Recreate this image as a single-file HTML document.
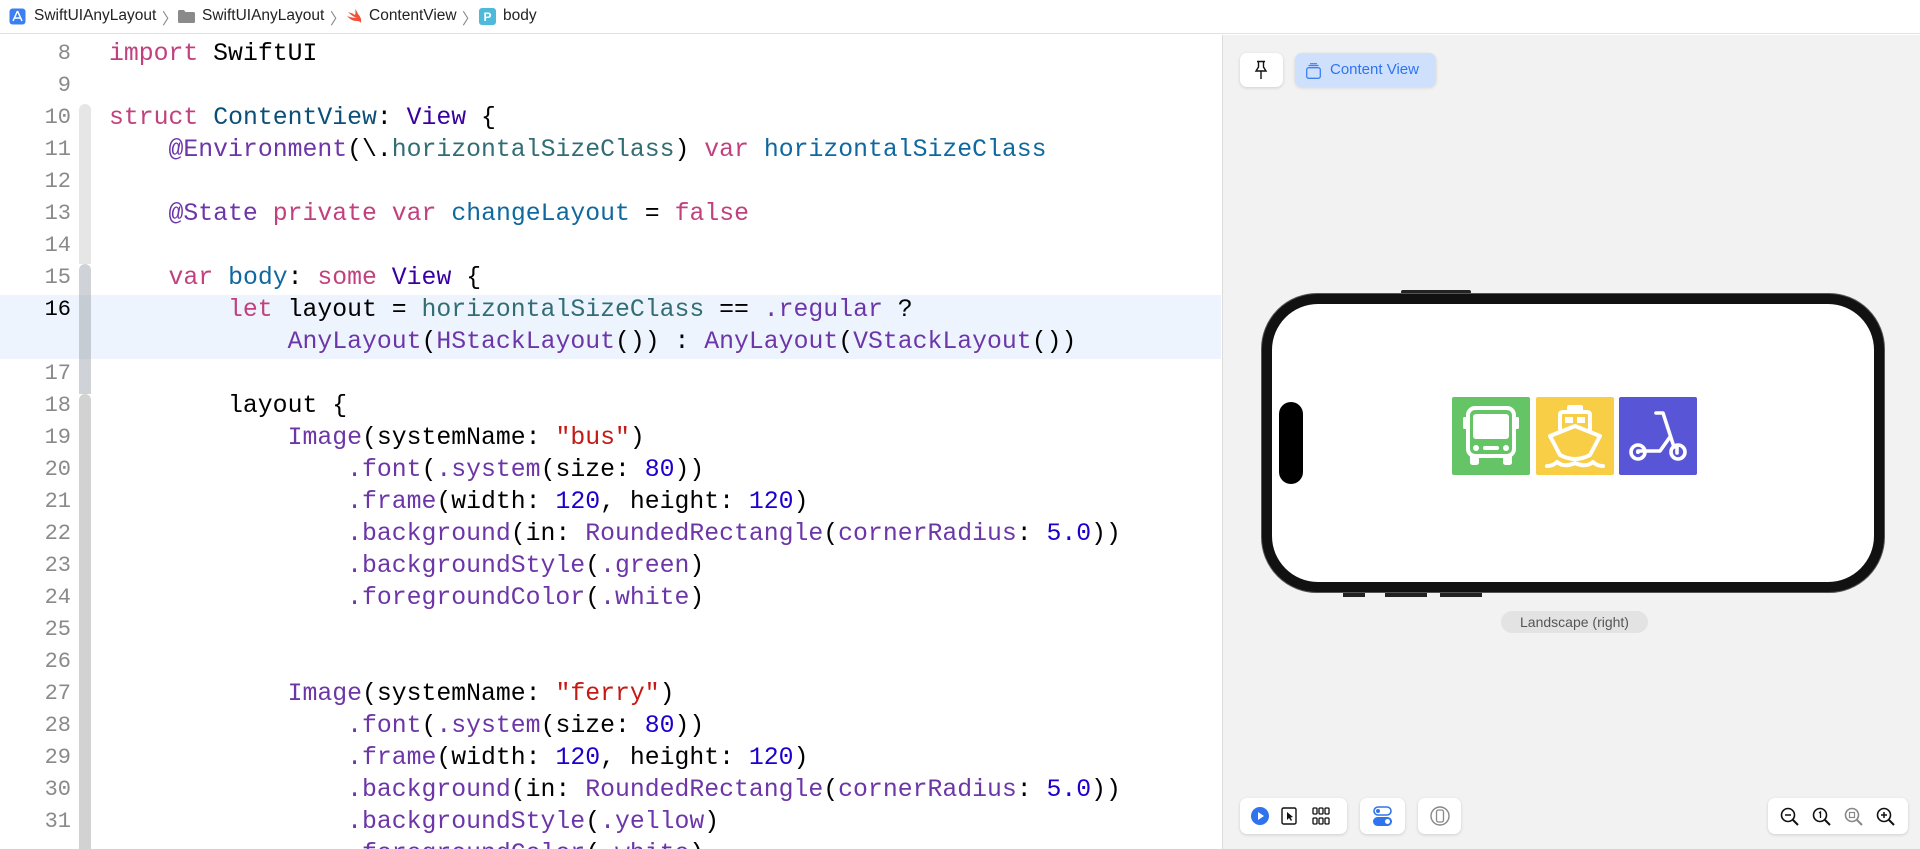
<!DOCTYPE html>
<html><head><meta charset="utf-8"><style>
*{margin:0;padding:0;box-sizing:border-box}
body{width:1920px;height:849px;overflow:hidden;background:#fff;font-family:"Liberation Sans",sans-serif;position:relative}
.top{position:absolute;left:0;top:0;width:1920px;height:34px;border-bottom:1px solid #e2e2e2;background:#fff;font-size:15.5px;color:#222}
.top span{position:absolute;top:7px}
.ed{position:absolute;left:0;top:35px;width:1221px;height:814px;background:#fff;overflow:hidden}
.hl{position:absolute;left:0;top:260px;width:1221px;height:64px;background:#edf4fe}
.ln{position:absolute;left:0;width:71px;text-align:right;font-family:"Liberation Mono",monospace;font-size:22px;color:#8a8a8a;line-height:32px}
.cd{position:absolute;left:109px;font-family:"Liberation Mono",monospace;font-size:24.8px;color:#000;white-space:pre;line-height:32px}
.k{color:#c1417f}.t{color:#3900a0}.p{color:#0b4f79}.a{color:#6c36a9}.m{color:#326d74}.d{color:#0f68a0}.s{color:#c41a16}.n{color:#1c00cf}
.pv{position:absolute;left:1222px;top:35px;width:698px;height:814px;background:#f2f2f2;border-left:1px solid #dcdcdc}
.btn{position:absolute;background:#fff;border-radius:7px;box-shadow:0 1px 3px rgba(0,0,0,.15)}
</style></head><body>
<div class="top">
<svg style="position:absolute;left:9px;top:8px" width="17" height="17" viewBox="0 0 17 17"><rect x="0.5" y="0.5" width="16" height="16" rx="3" fill="#3b7ff0"/><path d="M8.5 3 L4 13 M8.5 3 L13 13 M5.5 10 H11.5" stroke="#fff" stroke-width="1.5" fill="none"/></svg>
<span style="left:34px">SwiftUIAnyLayout</span><span style="left:162px;color:#888">〉</span>
<svg style="position:absolute;left:178px;top:10px" width="17" height="13" viewBox="0 0 17 13"><path d="M0 1.5 Q0 0 1.5 0 H6 L7.5 2 H15.5 Q17 2 17 3.5 V11.5 Q17 13 15.5 13 H1.5 Q0 13 0 11.5Z" fill="#8a8a8a"/></svg>
<span style="left:202px">SwiftUIAnyLayout</span><span style="left:330px;color:#888">〉</span>
<svg style="position:absolute;left:346px;top:9px" width="16" height="15" viewBox="0 0 16 15"><path d="M2 3 Q7 8 11 9 Q6 9 1 7 Q5 12 11 12 Q14 12 15 14 Q16 9 12 5 Q11 2 9 0 Q10 4 9 6 Q6 4 2 3Z" fill="#f05138"/></svg>
<span style="left:369px">ContentView</span><span style="left:462px;color:#888">〉</span>
<svg style="position:absolute;left:479px;top:8px" width="17" height="17" viewBox="0 0 17 17"><rect width="17" height="17" rx="3" fill="#4fb9d9"/><text x="8.5" y="13" text-anchor="middle" font-size="12" font-weight="bold" fill="#fff" font-family="Liberation Sans">P</text></svg>
<span style="left:503px">body</span>
</div>
<div class="ed">
<div class="hl"></div>
<div style="position:absolute;left:79px;top:69px;width:12px;height:160px;background:#e6e6e6;border-radius:6px 6px 0 0"></div>
<div style="position:absolute;left:79px;top:229px;width:12px;height:130px;background:#cfd3d8;border-radius:6px 6px 0 0"></div>
<div style="position:absolute;left:79px;top:359px;width:12px;height:460px;background:#d2d2d2;border-radius:6px 6px 0 0"></div>
<div style="position:absolute;left:79px;top:260px;width:12px;height:64px;background:#c6ccd4"></div>
<div class="ln" style="top:3px">8<br>9<br>10<br>11<br>12<br>13<br>14<br>15<br><span style="color:#000">16</span><br>&nbsp;<br>17<br>18<br>19<br>20<br>21<br>22<br>23<br>24<br>25<br>26<br>27<br>28<br>29<br>30<br>31</div>
<div class="cd" style="top:3px"><span class="k">import</span> SwiftUI

<span class="k">struct</span> <span class="p">ContentView</span>: <span class="t">View</span> {
    <span class="a">@Environment</span>(\.<span class="m">horizontalSizeClass</span>) <span class="k">var</span> <span class="d">horizontalSizeClass</span>

    <span class="a">@State</span> <span class="k">private</span> <span class="k">var</span> <span class="d">changeLayout</span> = <span class="k">false</span>

    <span class="k">var</span> <span class="d">body</span>: <span class="k">some</span> <span class="t">View</span> {
        <span class="k">let</span> layout = <span class="m">horizontalSizeClass</span> == <span class="a">.regular</span> ?
            <span class="a">AnyLayout</span>(<span class="a">HStackLayout</span>()) : <span class="a">AnyLayout</span>(<span class="a">VStackLayout</span>())

        layout {
            <span class="a">Image</span>(systemName: <span class="s">"bus"</span>)
                <span class="a">.font</span>(<span class="a">.system</span>(size: <span class="n">80</span>))
                <span class="a">.frame</span>(width: <span class="n">120</span>, height: <span class="n">120</span>)
                <span class="a">.background</span>(in: <span class="a">RoundedRectangle</span>(<span class="a">cornerRadius</span>: <span class="n">5.0</span>))
                <span class="a">.backgroundStyle</span>(<span class="a">.green</span>)
                <span class="a">.foregroundColor</span>(<span class="a">.white</span>)


            <span class="a">Image</span>(systemName: <span class="s">"ferry"</span>)
                <span class="a">.font</span>(<span class="a">.system</span>(size: <span class="n">80</span>))
                <span class="a">.frame</span>(width: <span class="n">120</span>, height: <span class="n">120</span>)
                <span class="a">.background</span>(in: <span class="a">RoundedRectangle</span>(<span class="a">cornerRadius</span>: <span class="n">5.0</span>))
                <span class="a">.backgroundStyle</span>(<span class="a">.yellow</span>)
                <span class="a">.foregroundColor</span>(<span class="a">.white</span>)</div>
</div>
<div class="pv">
<div class="btn" style="left:17px;top:18px;width:43px;height:34px"><svg style="position:absolute;left:13px;top:7px" width="16" height="20" viewBox="0 0 16 20"><path d="M4 1.5 H12 M5.5 1.5 V7 L3 11 H13 L10.5 7 V1.5 M8 11 V19" stroke="#111" stroke-width="1.4" fill="none"/></svg></div>
<div class="btn" style="left:72px;top:18px;width:141px;height:34px;background:#cfe0fd;box-shadow:0 1px 3px rgba(0,0,0,.12)"><svg style="position:absolute;left:11px;top:10px" width="15" height="16" viewBox="0 0 15 16"><rect x="0.7" y="4.7" width="13.6" height="10.6" rx="2" stroke="#3b7ff0" stroke-width="1.3" fill="none"/><path d="M2.5 2.5 H12.5 M4 0.7 H11" stroke="#3b7ff0" stroke-width="1.2"/></svg><span style="position:absolute;left:35px;top:8px;font-size:15px;color:#2f74ee">Content View</span></div>
<div style="position:absolute;left:178px;top:255px;width:70px;height:4px;background:#222;border-radius:2px"></div>
<div style="position:absolute;left:120px;top:557px;width:22px;height:5px;background:#222"></div>
<div style="position:absolute;left:162px;top:557px;width:42px;height:5px;background:#222"></div>
<div style="position:absolute;left:217px;top:557px;width:42px;height:5px;background:#222"></div>
<div style="position:absolute;left:38px;top:258px;width:624px;height:300px;background:#111;border-radius:56px;border:1px solid #555"></div>
<div style="position:absolute;left:49px;top:269px;width:602px;height:278px;background:#fff;border-radius:46px"></div>
<div style="position:absolute;left:56px;top:367px;width:24px;height:82px;background:#000;border-radius:12px"></div>
<svg style="position:absolute;left:229px;top:362px" width="78" height="78" viewBox="0 0 78 78"><rect width="78" height="78" rx="2" fill="#65c466"/><g fill="none" stroke="#fff" stroke-width="4"><rect x="16" y="11" width="46" height="48" rx="7"/></g><rect x="21" y="17" width="36" height="25" rx="3" fill="#fff"/><rect x="11" y="20" width="4" height="12" rx="1.5" fill="#fff"/><rect x="63" y="20" width="4" height="12" rx="1.5" fill="#fff"/><circle cx="24" cy="51" r="3" fill="#fff"/><circle cx="54" cy="51" r="3" fill="#fff"/><rect x="31" y="49" width="16" height="4" rx="2" fill="#fff"/><rect x="18" y="58" width="9" height="10" rx="2.5" fill="#fff"/><rect x="51" y="58" width="9" height="10" rx="2.5" fill="#fff"/></svg>
<svg style="position:absolute;left:313px;top:362px" width="78" height="78" viewBox="0 0 78 78"><rect width="78" height="78" rx="2" fill="#f7ce46"/><g fill="none" stroke="#fff" stroke-width="4" stroke-linejoin="round" stroke-linecap="round"><path d="M33 10 H45 V14 H33Z"/><path d="M24 32 V18 Q24 15 27 15 H51 Q54 15 54 18 V32"/><path d="M39 29 L14 39 L24 58 Q39 66 54 58 L64 39Z"/><path d="M11 69 Q17 69 21 65 Q28 71 39 66 Q50 71 57 65 Q61 69 67 69"/></g><rect x="29" y="20" width="8" height="6" fill="#fff"/><rect x="41" y="20" width="8" height="6" fill="#fff"/></svg>
<svg style="position:absolute;left:396px;top:362px" width="78" height="78" viewBox="0 0 78 78"><rect width="78" height="78" rx="2" fill="#5856d6"/><g fill="none" stroke="#fff" stroke-width="3.6" stroke-linecap="round" stroke-linejoin="round"><path d="M37 16 H44 L55 50"/><path d="M19 54 H41 L51 40"/><circle cx="19" cy="55" r="7"/><circle cx="59" cy="55" r="7"/></g><circle cx="19" cy="55" r="2" fill="#fff"/><path d="M58 50 V56" stroke="#fff" stroke-width="3.6" stroke-linecap="round"/></svg>
<div style="position:absolute;left:278px;top:576px;width:147px;height:22px;background:#e3e3e3;border-radius:11px;font-size:14px;color:#555;text-align:center;line-height:22px">Landscape (right)</div>
<div class="btn" style="left:17px;top:763px;width:107px;height:36px">
<svg style="position:absolute;left:11px;top:9px" width="18" height="18"><circle cx="9" cy="9" r="9" fill="#2f74ee"/><path d="M7 5 L13 9 L7 13Z" fill="#fff"/></svg>
<svg style="position:absolute;left:41px;top:9px" width="16" height="18"><rect x="1" y="1" width="14" height="16" rx="1.5" stroke="#111" stroke-width="1.4" fill="none"/><path d="M6 5 L6 13 L8 11 L10 14 L11 13 L9.5 10.5 L12 10Z" fill="#111"/></svg>
<svg style="position:absolute;left:72px;top:9px" width="18" height="18"><g fill="none" stroke="#111" stroke-width="1.3"><rect x="1" y="1" width="4" height="6" rx="1"/><rect x="7" y="1" width="4" height="6" rx="1"/><rect x="13" y="1" width="4" height="6" rx="1"/><rect x="1" y="11" width="4" height="6" rx="1"/><rect x="7" y="11" width="4" height="6" rx="1"/><rect x="13" y="11" width="4" height="6" rx="1"/></g></svg>
</div>
<div class="btn" style="left:137px;top:763px;width:45px;height:36px"><svg style="position:absolute;left:13px;top:8px" width="19" height="20"><rect x="1" y="1" width="17" height="8" rx="4" stroke="#2f74ee" stroke-width="1.6" fill="none"/><circle cx="5" cy="5" r="2" fill="#2f74ee"/><rect x="0" y="11" width="19" height="9" rx="4.5" fill="#2f74ee"/><circle cx="14.5" cy="15.5" r="2.5" fill="#fff"/></svg></div>
<div class="btn" style="left:195px;top:763px;width:43px;height:36px"><svg style="position:absolute;left:12px;top:8px" width="20" height="20"><circle cx="10" cy="10" r="9" stroke="#888" stroke-width="1.4" fill="none"/><rect x="6.5" y="4" width="7" height="12" rx="2" stroke="#888" stroke-width="1.3" fill="none"/></svg></div>
<div class="btn" style="left:545px;top:763px;width:140px;height:36px">
<svg style="position:absolute;left:12px;top:9px" width="20" height="20"><circle cx="8" cy="8" r="6.5" stroke="#111" stroke-width="1.6" fill="none"/><path d="M13 13 L18 18" stroke="#111" stroke-width="2"/><path d="M5 8 H11" stroke="#111" stroke-width="1.5"/></svg>
<svg style="position:absolute;left:44px;top:9px" width="20" height="20"><circle cx="8" cy="8" r="6.5" stroke="#111" stroke-width="1.6" fill="none"/><path d="M13 13 L18 18" stroke="#111" stroke-width="2"/><path d="M7 6 L8.5 5 V11" stroke="#111" stroke-width="1.3" fill="none"/></svg>
<svg style="position:absolute;left:76px;top:9px" width="20" height="20"><circle cx="8" cy="8" r="6.5" stroke="#888" stroke-width="1.6" fill="none"/><path d="M13 13 L18 18" stroke="#888" stroke-width="2"/><rect x="5.5" y="5.5" width="5" height="5" stroke="#888" stroke-width="1.2" fill="none"/></svg>
<svg style="position:absolute;left:108px;top:9px" width="20" height="20"><circle cx="8" cy="8" r="6.5" stroke="#111" stroke-width="1.6" fill="none"/><path d="M13 13 L18 18" stroke="#111" stroke-width="2"/><path d="M5 8 H11 M8 5 V11" stroke="#111" stroke-width="1.5"/></svg>
</div>
</div>
</body></html>
